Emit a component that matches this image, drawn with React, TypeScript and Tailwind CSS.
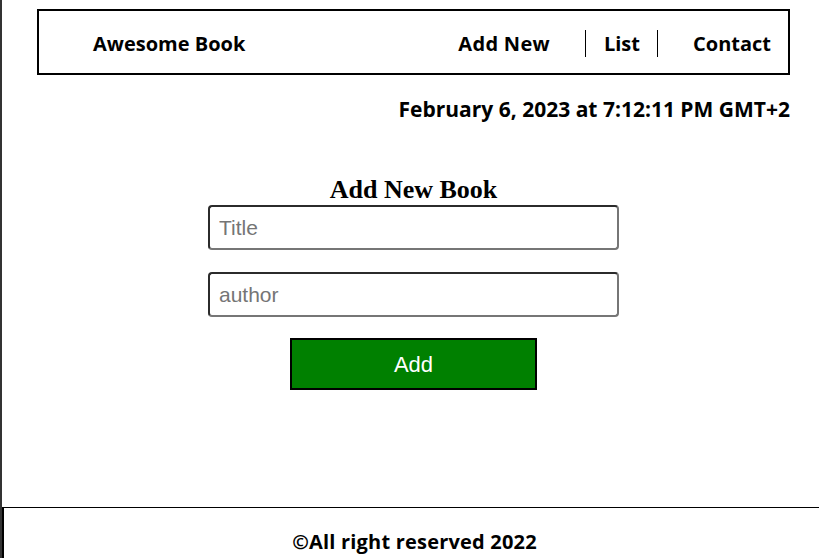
import React from "react";

export default function App() {
  const sans = { fontFamily: '"Open Sans", "Noto Sans", sans-serif' };
  const arial = { fontFamily: '"Liberation Sans", Arial, sans-serif' };
  return (
    <div className="min-h-[558px] border-l-2 border-[#333] bg-white flex flex-col" style={sans}>
      <header className="mt-[9px] ml-[35px] w-[753px] h-[66px] border-2 border-black flex items-center justify-between pl-[54px] pr-[17px]">
        <h1 className="text-[20px] font-bold text-black leading-none pt-[3px]">Awesome Book</h1>
        <ul className="flex items-center text-[20px] font-bold text-black pt-[2px]">
          <li className="pr-[35px] border-r border-black h-[27px] flex items-center pt-[2px] tracking-[0.3px]">Add New</li>
          <li className="pl-[18px] pr-[17px] border-r border-black h-[27px] flex items-center pt-[2px]">List</li>
          <li className="pl-[35px] h-[27px] flex items-center pt-[2px]">Contact</li>
        </ul>
      </header>
      <div className="w-[788px] mt-[21px] text-right text-[21px] font-bold text-black leading-[26px]">
        February 6, 2023 at 7:12:11 PM GMT+2
      </div>
      <main className="flex flex-col items-center mt-[53px] ml-[6px]">
        <h2 className="text-[26px] font-bold leading-[30px] text-black" style={{ fontFamily: '"Liberation Serif", serif' }}>
          Add New Book
        </h2>
        <input
          placeholder="Title"
          className="w-[411px] h-[45px] border-2 border-[#2b2b2b] border-b-[#767676] border-r-[#767676] rounded-[4px] px-[9px] text-[21px] placeholder:text-[#757575]"
          style={arial}
        />
        <input
          placeholder="author"
          className="mt-[22px] w-[411px] h-[45px] border-2 border-[#2b2b2b] border-b-[#767676] border-r-[#767676] rounded-[4px] px-[9px] text-[21px] placeholder:text-[#757575]"
          style={arial}
        />
        <button
          className="mt-[21px] w-[247px] h-[52px] bg-[#008000] border-2 border-black text-white text-[22px]"
          style={arial}
        >
          Add
        </button>
      </main>
      <footer className="mt-auto border-t border-l-2 border-black h-[51px] flex items-center justify-center">
        <p className="text-[20px] font-bold text-black pt-[18px] ml-[6px] tracking-[0.2px]" style={sans}>
          ©All right reserved 2022
        </p>
      </footer>
    </div>
  );
}
